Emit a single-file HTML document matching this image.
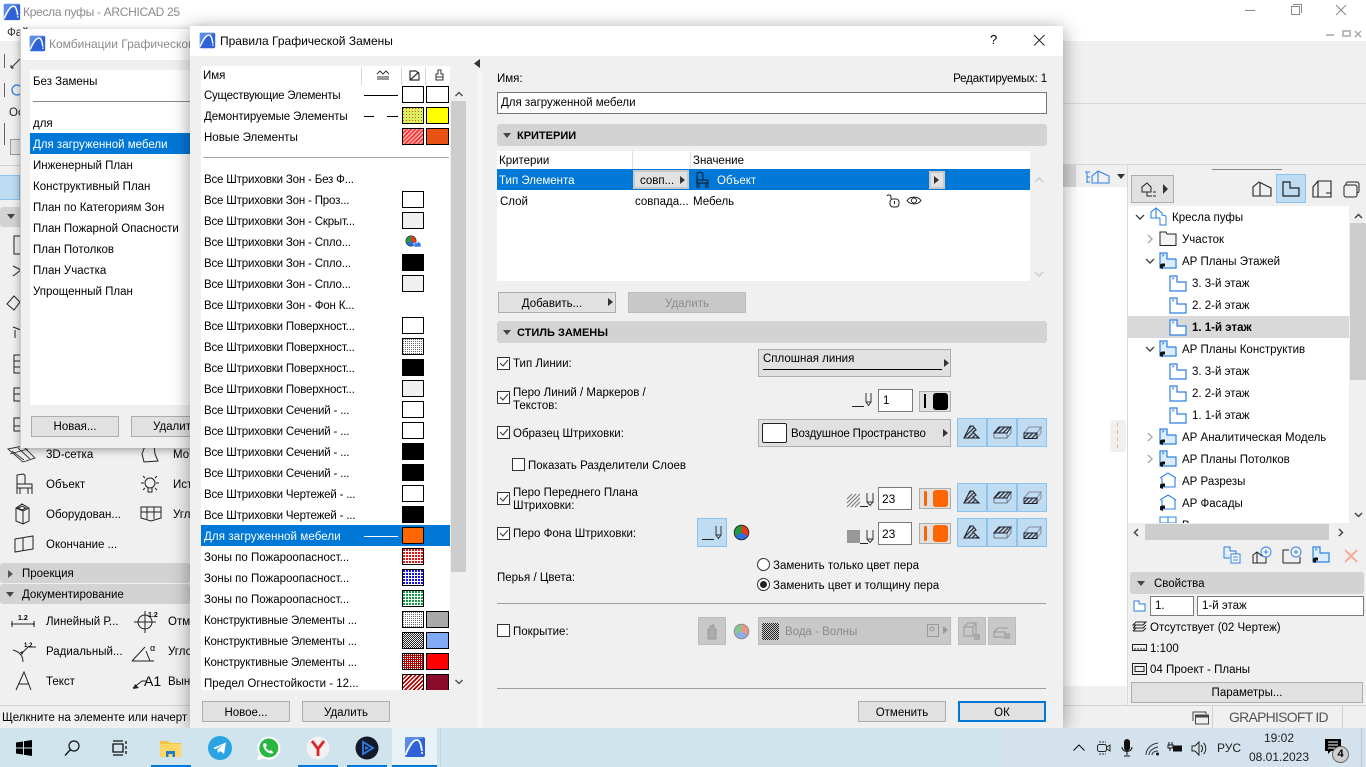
<!DOCTYPE html>
<html lang="ru"><head><meta charset="utf-8"><title>ARCHICAD</title>
<style>
html,body{margin:0;padding:0;width:1366px;height:767px;overflow:hidden;background:#f0f0f0;font-family:"Liberation Sans","Noto Sans CJK SC",sans-serif;font-size:11.5px;color:#000}
div,svg{position:absolute;box-sizing:border-box}
svg{overflow:visible}
.t{white-space:nowrap;line-height:18px;height:18px}
.v{letter-spacing:-.18px}
.w{background:#fff}
.b{background:#e1e1e1;border:1px solid #adadad;text-align:center;line-height:22px;white-space:nowrap}
.h{background:#d3d3d3;border-radius:3px}
.s{width:22px;height:17px;left:402px;border:1px solid #000;background:#fff}
.s2{width:23px;height:17px;left:426px;border:1px solid #000;background:#fff}
.p{background:conic-gradient(from 90deg at 1px 1px,transparent 0 50%,var(--c) 0 75%,transparent 0) 0 0/2px 2px,var(--g,#fff)}
.q{background:conic-gradient(from 90deg at 2px 2px,transparent 0 50%,var(--c) 0 75%,transparent 0) 0 0/3px 3px,#fff}
.dg{--c:#666}
.dd{background:repeating-conic-gradient(#222 0 25%,#eee 0 50%) 0 0/2px 2px}
.dr{--c:#f01010}
.db{--c:#1010f0}
.dn{--c:#109a40}
.drr{--c:#fff;--g:#a80000}
.cb{width:13px;height:13px;border:1px solid #333;background:#fff}
.tg{width:30px;height:29px;background:#bfdcf2;border:1px solid #8cc4ee}
.in{background:#fff;border:1px solid #7a7a7a}
.pb{width:32px;height:21px;left:919px;background:#e1e1e1;border:1px solid #adadad}
.dis{background:#c8c8c8;border:1px solid #bcbcbc}
</style></head><body>
<svg width="0" height="0" style="position:absolute">
<defs>
<pattern id="hx" width="3" height="3" patternUnits="userSpaceOnUse" patternTransform="rotate(-45)"><rect width="3" height="1.3" fill="#333"/></pattern>
<symbol id="plan" viewBox="0 0 18 17" overflow="visible"><path d="M1 1h7v6h9v9H1z" fill="#fff" stroke="#2d7fe6" stroke-width="1.2"/><path d="M3.500 2v3l2-2z" fill="#2d7fe6"/></symbol>
<symbol id="planf" viewBox="0 0 18 17" overflow="visible"><path d="M1 1h7v6h9v9H1z" fill="#dcecfb" stroke="#2d7fe6" stroke-width="1.2"/><path d="M3.500 2v3l2-2z" fill="#2d7fe6"/><path d="M1 16v-3.500l2-1h3v3H4v2.500z" fill="#111"/></symbol>
<symbol id="t1" viewBox="0 0 18 14" overflow="visible"><path d="M1 13 7 1h3l3 4-3 2 6 6z" fill="url(#hx)" stroke="#223" stroke-width="1.100"/></symbol>
<symbol id="t2" viewBox="0 0 18 14" overflow="visible"><path d="M1 13 V8L6 2H18L14 8H1M14 8V13H1M14 13L18 8V2" fill="none" stroke="#778" stroke-width="1"/><path d="M1 8 6 2H18L14 8z" fill="url(#hx)" stroke="#223"/></symbol>
<symbol id="t3" viewBox="0 0 18 14" overflow="visible"><path d="M1 8 6 2H18L14 8H1M14 13 18 8V2" fill="none" stroke="#889" stroke-width="1"/><rect x="1" y="8" width="13" height="5.500" fill="url(#hx)" stroke="#223"/></symbol>
<symbol id="pen" viewBox="0 0 20 15" overflow="visible"><path d="M0 14.500H12" stroke="#222" fill="none"/><path d="M14 1v9h5V1M14 10l2.500 3.500L19 10" stroke="#333" fill="none"/></symbol>
<symbol id="ac" viewBox="0 0 22 22"><rect x="1" y="1" width="20" height="20" rx="2" fill="#2f62d8"/><path d="M1 21 12 3l4 0 3 0v-2H1z" fill="#6d9df0" opacity=".7"/><path d="M1.500 19C5 10 9 4 13 4c3 0 4 5 5 11" fill="none" stroke="#fff" stroke-width="1.800"/><circle cx="18" cy="17" r="1" fill="#fff"/></symbol>
<symbol id="wh" viewBox="0 0 16 16"><circle cx="8" cy="8" r="7.300" fill="#222"/><path d="M8 8V1.500A6.500 6.500 0 0 0 2.400 11.300z" fill="#1f9a3c"/><path d="M8 8V1.500a6.500 6.500 0 0 1 5.600 9.800z" fill="#e53c1c"/><path d="M8 8l5.600 3.300a6.500 6.500 0 0 1-11.200 0z" fill="#2a6fe0"/></symbol>
</defs></svg>

<!-- main window -->
<div class="w" style="left:0;top:0;width:1366px;height:41px"></div>
<svg style="left:3px;top:3px" width="18" height="18"><use href="#ac" width="18" height="18"/></svg>
<div class="t" style="left:23px;top:3px;color:#8b8b8b;font-size:12px;letter-spacing:-.3px">Кресла пуфы - ARCHICAD 25</div>
<div class="t" style="left:7px;top:24px;color:#333">Фай</div>
<div style="left:1245px;top:10px;width:10px;height:1px;background:#888"></div>
<div style="left:1291px;top:6px;width:9px;height:9px;border:1px solid #888;background:#fff"></div>
<div style="left:1293px;top:4px;width:9px;height:9px;border-top:1px solid #888;border-right:1px solid #888"></div>
<svg style="left:1336px;top:5px" width="11" height="11"><path d="M0 0l10 10M10 0 0 10" stroke="#888" fill="none"/></svg>
<div style="left:1326px;top:34px;width:8px;height:2px;background:#bbb"></div>
<div style="left:1342px;top:30px;width:9px;height:7px;border:2px solid #bbb"></div>
<svg style="left:1355px;top:31px" width="6" height="6"><path d="M0 0l6 6M6 0 0 6" stroke="#aaa" stroke-width="1.500" fill="none"/></svg>

<!-- right gray chrome -->
<div style="left:1063px;top:103px;width:65px;height:1px;background:#d8d8d8"></div>
<div style="left:1063px;top:103px;width:303px;height:1px;background:#d8d8d8"></div>
<div style="left:1063px;top:164px;width:303px;height:1px;background:#d8d8d8"></div>
<div style="left:1063px;top:165px;width:13px;height:22px;background:#d5d5d5"></div>
<div class="w" style="left:1063px;top:187px;width:65px;height:499px"></div>
<svg style="left:1084px;top:169px" width="27" height="16"><path d="M1 3h5M3 3v11M3 8h3M3 13h3" stroke="#2d7fe6" fill="none"/><path d="M8 14V7l6-5 11 5v7z" fill="none" stroke="#2d7fe6"/><path d="M14 2v12" stroke="#2d7fe6"/></svg>
<svg style="left:1117px;top:174px" width="8" height="5"><path d="M0 0h8L4 5z" fill="#333"/></svg>
<div style="left:1127px;top:165px;width:1px;height:541px;background:#d8d8d8"></div>
<div style="left:1212px;top:169px;width:70px;height:1px;background:#888"></div>

<div class="b" style="left:1131px;top:175px;width:43px;height:28px;background:#e1e1e1"></div>
<svg style="left:1141px;top:181px" width="26" height="16"><path d="M1 6l5-4 4 4v5H1zM6 11v4h5M6 13h0" fill="none" stroke="#222"/><path d="M12 11h3M12 15h3" stroke="#222"/><path d="M22 3l5 5-5 5z" fill="#333"/></svg>
<svg style="left:1252px;top:180px" width="20" height="17" viewBox="0 0 20 17"><path d="M1 16V7l6-5 12 6v8zM8 3v13" fill="none" stroke="#222" stroke-width="1.100"/></svg>
<div class="tg" style="left:1276px;top:174px;height:29px"></div>
<svg style="left:1282px;top:181px" width="18" height="16"><path d="M1 1h7v6h9v8H1z" fill="none" stroke="#222" stroke-width="1.200"/></svg>
<svg style="left:1312px;top:180px" width="20" height="18"><path d="M1 17V7l5-6h13v16zM6 1v16" fill="none" stroke="#222" stroke-width="1.100"/><path d="M14 13h5" stroke="#222"/></svg>
<svg style="left:1343px;top:181px" width="18" height="17"><rect x="3" y="1" width="13" height="11" rx="2" fill="none" stroke="#222"/><rect x="1" y="4" width="13" height="12" rx="2" fill="#f0f0f0" stroke="#222"/></svg>

<!-- project tree -->
<div class="w" style="left:1128px;top:206px;width:221px;height:317px;overflow:hidden">
<div style="left:0;top:110px;width:221px;height:22px;background:#d9d9d9"></div>
<svg style="left:7px;top:9px" width="10" height="6"><path d="M1 0l4 4 4-4" stroke="#444" stroke-width="1.400" fill="none"/></svg>
<svg style="left:22px;top:1px" width="20" height="19"><path d="M1 11V5l5-4 6 5v5zM6 1v10" fill="none" stroke="#2d7fe6" stroke-width="1.100"/><path d="M12 8l4 1v9h-6v-7" fill="#fff" stroke="#2d7fe6"/></svg>
<div class="t" style="left:44px;top:3px">Кресла пуфы</div>
<svg style="left:19px;top:28px" width="7" height="10"><path d="M1 1l4 4-4 4" stroke="#aaa" stroke-width="1.400" fill="none"/></svg>
<svg style="left:31px;top:25px" width="18" height="16"><path d="M1 14.500V1h6l1 2h9v11.500z" fill="#f4f4f4" stroke="#222"/></svg>
<div class="t" style="left:54px;top:25px">Участок</div>
<svg style="left:17px;top:53px" width="10" height="6"><path d="M1 0l4 4 4-4" stroke="#444" stroke-width="1.400" fill="none"/></svg>
<svg style="left:31px;top:46px" width="18" height="17"><use href="#planf" width="18" height="17"/></svg>
<div class="t" style="left:54px;top:47px">АР Планы Этажей</div>
<svg style="left:41px;top:69px" width="18" height="17"><use href="#plan" width="18" height="17"/></svg>
<div class="t" style="left:64px;top:69px">3. 3-й этаж</div>
<svg style="left:41px;top:91px" width="18" height="17"><use href="#plan" width="18" height="17"/></svg>
<div class="t" style="left:64px;top:91px">2. 2-й этаж</div>
<svg style="left:41px;top:113px" width="18" height="17"><use href="#plan" width="18" height="17"/></svg>
<div class="t" style="left:64px;top:113px;font-weight:bold">1. 1-й этаж</div>
<svg style="left:17px;top:141px" width="10" height="6"><path d="M1 0l4 4 4-4" stroke="#444" stroke-width="1.400" fill="none"/></svg>
<svg style="left:31px;top:134px" width="18" height="17"><use href="#planf" width="18" height="17"/></svg>
<div class="t" style="left:54px;top:135px">АР Планы Конструктив</div>
<svg style="left:41px;top:157px" width="18" height="17"><use href="#plan" width="18" height="17"/></svg>
<div class="t" style="left:64px;top:157px">3. 3-й этаж</div>
<svg style="left:41px;top:179px" width="18" height="17"><use href="#plan" width="18" height="17"/></svg>
<div class="t" style="left:64px;top:179px">2. 2-й этаж</div>
<svg style="left:41px;top:201px" width="18" height="17"><use href="#plan" width="18" height="17"/></svg>
<div class="t" style="left:64px;top:201px">1. 1-й этаж</div>
<svg style="left:19px;top:226px" width="7" height="10"><path d="M1 1l4 4-4 4" stroke="#aaa" stroke-width="1.400" fill="none"/></svg>
<svg style="left:31px;top:222px" width="18" height="17"><use href="#planf" width="18" height="17"/></svg>
<div class="t" style="left:54px;top:223px">АР Аналитическая Модель</div>
<svg style="left:19px;top:248px" width="7" height="10"><path d="M1 1l4 4-4 4" stroke="#aaa" stroke-width="1.400" fill="none"/></svg>
<svg style="left:31px;top:244px" width="18" height="17"><use href="#planf" width="18" height="17"/></svg>
<div class="t" style="left:54px;top:245px">АР Планы Потолков</div>
<svg style="left:31px;top:266px" width="18" height="17"><path d="M1 6 9 1l8 5M3 6v9h13V6" fill="none" stroke="#2d7fe6" stroke-width="1.100"/><path d="M1 16v-3.500l2-1h3v3H4v2.500z" fill="#111"/></svg>
<div class="t" style="left:54px;top:267px">АР Разрезы</div>
<svg style="left:31px;top:288px" width="18" height="17"><path d="M1 6 9 1l8 5M3 6v9h13V6" fill="none" stroke="#2d7fe6" stroke-width="1.100"/><path d="M1 16v-3.500l2-1h3v3H4v2.500z" fill="#111"/></svg>
<div class="t" style="left:54px;top:289px">АР Фасады</div>
<svg style="left:31px;top:310px" width="18" height="17"><rect x="1" y="1" width="16" height="14" fill="none" stroke="#2d7fe6"/><path d="M9 1v14M1 7h16" stroke="#2d7fe6"/></svg>
<div class="t" style="left:54px;top:311px">В</div>
</div>
<div style="left:1350px;top:206px;width:16px;height:317px;background:#f0f0f0"></div>
<div style="left:1350px;top:223px;width:16px;height:157px;background:#cdcdcd"></div>
<svg style="left:1354px;top:213px" width="9" height="6"><path d="M1 5l3.500-3.500L8 5" stroke="#444" stroke-width="1.500" fill="none"/></svg>
<svg style="left:1354px;top:512px" width="9" height="6"><path d="M1 1l3.500 3.500L8 1" stroke="#444" stroke-width="1.500" fill="none"/></svg>
<div style="left:1145px;top:524px;width:184px;height:16px;background:#cdcdcd"></div>
<svg style="left:1133px;top:528px" width="6" height="9"><path d="M5 1 1.500 4.500 5 8" stroke="#444" stroke-width="1.500" fill="none"/></svg>
<svg style="left:1338px;top:528px" width="6" height="9"><path d="M1 1l3.500 3.500L1 8" stroke="#444" stroke-width="1.500" fill="none"/></svg>

<svg style="left:1223px;top:546px" width="18" height="18"><path d="M1 1h6v4h6v3M1 1v11h6" fill="#dcecfb" stroke="#2d7fe6"/><rect x="8" y="8" width="9" height="9" fill="#fff" stroke="#2d7fe6"/><path d="M10 11h5M10 14h5" stroke="#2d7fe6"/></svg>
<svg style="left:1252px;top:546px" width="20" height="18"><path d="M1 17V9l4-3 5 4h4v7zM5 6v11" fill="none" stroke="#222"/><circle cx="14" cy="6" r="5" fill="#fff" stroke="#2d7fe6"/><path d="M11.500 6h5M14 3.500v5" stroke="#2d7fe6"/></svg>
<svg style="left:1282px;top:546px" width="20" height="18"><path d="M1 17V4h6M1 17h17v-6" fill="none" stroke="#222"/><circle cx="14" cy="6" r="5" fill="#fff" stroke="#2d7fe6"/><path d="M11.500 6h5M14 3.500v5" stroke="#2d7fe6"/></svg>
<svg style="left:1312px;top:546px" width="18" height="17"><use href="#planf" width="18" height="17"/></svg>
<svg style="left:1344px;top:549px" width="14" height="14"><path d="M1 1l12 12M13 1 1 13" stroke="#f7ab9a" stroke-width="2" fill="none"/></svg>

<div class="h" style="left:1130px;top:572px;width:234px;height:22px"></div>
<svg style="left:1137px;top:581px" width="8" height="5"><path d="M0 0h8L4 5z" fill="#444"/></svg>
<div class="t" style="left:1154px;top:575px">Свойства</div>
<svg style="left:1133px;top:600px" width="13" height="12"><path d="M1 1h5v3h6v7H1z" fill="#fff" stroke="#2d7fe6"/></svg>
<div class="in t" style="left:1150px;top:596px;width:44px;height:20px;padding:0 4px">1.</div>
<div class="in t" style="left:1197px;top:596px;width:167px;height:20px;padding:0 4px">1-й этаж</div>
<svg style="left:1132px;top:621px" width="15" height="12"><path d="M1 4l3-3h10l-3 3zM1 7l3-3M14 4l-3 3H1M1 10l3-3M14 7l-3 3H1" fill="none" stroke="#222"/></svg>
<div class="t" style="left:1150px;top:619px">Отсутствует (02 Чертеж)</div>
<svg style="left:1132px;top:644px" width="15" height="8"><rect x=".5" y=".5" width="14" height="6" fill="none" stroke="#222"/><path d="M3 4v2M6 4v2M9 4v2M12 4v2" stroke="#222"/></svg>
<div class="t" style="left:1150px;top:640px">1:100</div>
<svg style="left:1132px;top:663px" width="15" height="12"><rect x=".5" y=".5" width="14" height="11" fill="none" stroke="#222"/><rect x="3" y="3.500" width="9" height="5" fill="none" stroke="#222"/></svg>
<div class="t" style="left:1150px;top:661px">04 Проект - Планы</div>
<div class="b" style="left:1131px;top:682px;width:232px;height:21px;line-height:21px">Параметры...</div>

<!-- status bar -->
<div style="left:0;top:705px;width:1366px;height:1px;background:#d0d0d0"></div>
<div class="t" style="left:2px;top:709px;font-size:11.5px">Щелкните на элементе или начерт</div>
<svg style="left:1192px;top:711px" width="18" height="14"><path d="M1 10V1h13v2" fill="none" stroke="#444"/><rect x="3.500" y="4" width="13" height="9" fill="#f0f0f0" stroke="#444"/><path d="M4 5.500h12" stroke="#444" stroke-width="2"/></svg>
<div style="left:1212px;top:706px;width:1px;height:22px;background:#d0d0d0"></div>
<div style="left:1342px;top:706px;width:1px;height:22px;background:#d0d0d0"></div>
<div class="t" style="left:1229px;top:708px;font-size:14px;color:#555;letter-spacing:-.75px">GRAPHISOFT ID</div>

<!-- left palette -->
<div style="left:0;top:165px;width:200px;height:1px;background:#d0d0d0"></div>
<div style="left:0;top:175px;width:20px;height:25px;background:#bfdcf2;border:1px solid #8cc4ee;border-left:0"></div>
<div class="h" style="left:0;top:207px;width:60px;height:20px"></div>
<svg style="left:7px;top:214px" width="8" height="5"><path d="M0 0h8L4 5z" fill="#444"/></svg>
<div style="left:4px;top:54px;width:1px;height:14px;background:#666"></div>
<div style="left:4px;top:83px;width:1px;height:14px;background:#666"></div>
<div class="t" style="left:9px;top:104px;color:#222">Ос</div>
<div style="left:4px;top:123px;width:1px;height:22px;background:#666"></div>
<div style="left:10px;top:139px;width:20px;height:16px;border:1px solid #999;background:#e1e1e1"></div>
<svg style="left:10px;top:58px" width="12" height="11"><path d="M1 10 10 1M1 10h3M1 10V7" stroke="#333" fill="none"/></svg>
<svg style="left:11px;top:84px" width="10" height="12"><circle cx="6" cy="6" r="5" fill="none" stroke="#2d7fe6" stroke-width="1.300"/></svg>
<svg style="left:12px;top:235px" width="10" height="20"><path d="M9 1H2v18h7" fill="none" stroke="#222"/></svg>
<svg style="left:12px;top:265px" width="10" height="12"><path d="M1 1l8 4-8 6" fill="none" stroke="#222"/></svg>
<svg style="left:6px;top:295px" width="16" height="16"><path d="M1 9 8 1l6 6-6 8z" fill="none" stroke="#222"/></svg>
<svg style="left:12px;top:325px" width="10" height="14"><path d="M1 2l8 3M3 5v8" fill="none" stroke="#222"/></svg>
<svg style="left:13px;top:354px" width="10" height="20"><path d="M9 1H1v18h8M1 7h8M1 13h8" fill="none" stroke="#222"/></svg>
<svg style="left:13px;top:387px" width="10" height="15"><path d="M9 1H1v13h8M1 7h8" fill="none" stroke="#222"/></svg>
<svg style="left:13px;top:417px" width="10" height="15"><path d="M9 1H1v13h8M1 9h8" fill="none" stroke="#222"/></svg>

<svg style="left:7px;top:445px" width="30" height="18"><path d="M1 4 16 1l12 12-12 4zM5 6l12 9M11 3l12 11M3 9l18-5" fill="none" stroke="#333" stroke-width=".9"/></svg>
<div class="t" style="left:46px;top:446px">3D-сетка</div>
<svg style="left:16px;top:473px" width="18" height="22"><path d="M1 21V2l6-1 2 1v9M1 11h15v10M1 15h15M4 15v6M12 15v6" fill="none" stroke="#222"/></svg>
<div class="t" style="left:46px;top:476px">Объект</div>
<svg style="left:15px;top:503px" width="15" height="22"><path d="M1 5l6-4 7 4v13l-6 3-7-3zM1 5l7 3 6-3M8 8v13M3 5l4-2 4 2-4 2z" fill="none" stroke="#222"/></svg>
<div class="t" style="left:46px;top:506px">Оборудован...</div>
<svg style="left:14px;top:535px" width="20" height="18"><path d="M1 4 19 1v13L1 17zM9 3v13" fill="none" stroke="#222"/></svg>
<div class="t" style="left:46px;top:536px">Окончание ...</div>
<svg style="left:140px;top:445px" width="20" height="19"><path d="M5 1 2 9l2 8 14-1-3-7-1-8" fill="none" stroke="#222"/></svg>
<div class="t" style="left:173px;top:446px">Мо</div>
<svg style="left:140px;top:474px" width="20" height="20"><circle cx="10" cy="9" r="5" fill="none" stroke="#222"/><path d="M8 14v4h4v-4M1 9h3M16 9h3M3 2l2 2M17 2l-2 2M3 16l2-2M17 16l-2-2" fill="none" stroke="#222"/></svg>
<div class="t" style="left:173px;top:476px">Ист</div>
<svg style="left:140px;top:505px" width="22" height="17"><path d="M1 2h20v11l-10 3-10-3zM1 7h20M7 2v12M14 2v12" fill="none" stroke="#222"/></svg>
<div class="t" style="left:173px;top:506px">Угл</div>

<div class="h" style="left:0;top:563px;width:190px;height:20px"></div>
<svg style="left:8px;top:570px" width="5" height="8"><path d="M0 0l5 4-5 4z" fill="#555"/></svg>
<div class="t" style="left:22px;top:565px">Проекция</div>
<div class="h" style="left:0;top:584px;width:190px;height:20px"></div>
<svg style="left:6px;top:592px" width="8" height="5"><path d="M0 0h8L4 5z" fill="#444"/></svg>
<div class="t" style="left:22px;top:586px">Документирование</div>

<svg style="left:10px;top:613px" width="26" height="15"><path d="M1 11h24M2 8v6M24 8v6" stroke="#222" fill="none"/><text x="8" y="7" font-size="7" font-weight="bold" font-family="Liberation Sans">1.2</text></svg>
<div class="t" style="left:46px;top:613px">Линейный Р...</div>
<svg style="left:12px;top:643px" width="24" height="20"><path d="M1 7C8 9 11 13 11 19M10 10l6-6h8" fill="none" stroke="#222"/><path d="M8 9l4-1-2 4z" fill="#222"/><text x="12" y="4" font-size="6" font-weight="bold" font-family="Liberation Sans">1.2</text></svg>
<div class="t" style="left:46px;top:643px">Радиальный...</div>
<svg style="left:15px;top:671px" width="18" height="20"><path d="M1 19 9 1l7 18M4 13h10" fill="none" stroke="#222"/></svg>
<div class="t" style="left:46px;top:673px">Текст</div>
<svg style="left:134px;top:611px" width="26" height="22"><circle cx="11" cy="11" r="7" fill="none" stroke="#222"/><path d="M0 11h22M11 0v22" stroke="#222"/><text x="14" y="6" font-size="7" font-weight="bold" font-family="Liberation Sans">1.2</text></svg>
<div class="t" style="left:168px;top:613px">Отм</div>
<svg style="left:131px;top:643px" width="26" height="20"><path d="M1 18 14 4M1 18h22M15 8l4 10" fill="none" stroke="#222"/><text x="19" y="8" font-size="9" font-family="Liberation Sans">α</text></svg>
<div class="t" style="left:168px;top:643px">Угло</div>
<svg style="left:132px;top:674px" width="34" height="16"><path d="M1 14 10 7h5" fill="none" stroke="#222"/><path d="M1 15l6-1-4-4z" fill="#222"/><text x="12" y="12" font-size="14" font-family="Liberation Sans">A1</text></svg>
<div class="t" style="left:168px;top:673px">Вын</div>

<!-- dialog 1 -->
<div style="left:20px;top:29px;width:190px;height:419px;background:#f0f0f0;box-shadow:0 2px 8px rgba(0,0,0,.35);overflow:hidden;border-left:1px solid #ccc">
<div class="w" style="left:0;top:0;width:190px;height:31px"></div>
<svg style="left:8px;top:6px" width="17" height="17"><use href="#ac" width="17" height="17"/></svg>
<div class="t" style="left:28px;top:6px;color:#8b8b8b;font-size:12px">Комбинации Графического</div>
<div class="w" style="left:9px;top:41px;width:181px;height:335px"></div>
<div class="t" style="left:12px;top:44px">Без Замены</div>
<div style="left:12px;top:72px;width:178px;height:1px;background:#888"></div>
<div class="t" style="left:12px;top:86px">для</div>
<div style="left:9px;top:104px;width:181px;height:21px;background:#0078d7"></div>
<div class="t" style="left:12px;top:107px;color:#fff">Для загруженной мебели</div>
<div class="t" style="left:12px;top:128px">Инженерный План</div>
<div class="t" style="left:12px;top:149px">Конструктивный План</div>
<div class="t" style="left:12px;top:170px">План по Категориям Зон</div>
<div class="t" style="left:12px;top:191px">План Пожарной Опасности</div>
<div class="t" style="left:12px;top:212px">План Потолков</div>
<div class="t" style="left:12px;top:233px">План Участка</div>
<div class="t" style="left:12px;top:254px">Упрощенный План</div>
<div class="b" style="left:10px;top:387px;width:88px;height:21px;line-height:21px">Новая...</div>
<div class="b" style="left:110px;top:387px;width:88px;height:21px;line-height:21px">Удалить</div>
</div>

<!-- dialog 2 -->
<div style="left:190px;top:26px;width:873px;height:702px;background:#f0f0f0;box-shadow:0 3px 18px rgba(0,0,0,.4)"></div>
<div class="w" style="left:190px;top:26px;width:873px;height:30px"></div>
<svg style="left:199px;top:32px" width="17" height="17"><use href="#ac" width="17" height="17"/></svg>
<div class="t" style="left:220px;top:32px;font-size:12px">Правила Графической Замены</div>
<div class="t" style="left:990px;top:31px;font-size:13px">?</div>
<svg style="left:1034px;top:35px" width="11" height="11"><path d="M0 0l10.500 10.500M10.500 0 0 10.500" stroke="#222" fill="none"/></svg>
<svg style="left:474px;top:59px" width="6" height="9"><path d="M6 0v9L0 4.500z" fill="#333"/></svg>
<div style="left:477px;top:70px;width:5px;height:658px;background:#f6f6f6"></div>

<!-- rules list -->
<div class="w" style="left:201px;top:66px;width:249px;height:624px"></div>
<div style="left:361px;top:67px;width:1px;height:18px;background:#d8d8d8"></div>
<div style="left:401px;top:67px;width:1px;height:18px;background:#d8d8d8"></div>
<div style="left:425px;top:67px;width:1px;height:18px;background:#d8d8d8"></div>
<div class="t" style="left:203px;top:67px">Имя</div>
<svg style="left:376px;top:69px" width="14" height="11"><path d="M1 5l3-3 3 3 3-3 3 3M1 8h12M1 10h12" fill="none" stroke="#333"/></svg>
<svg style="left:409px;top:70px" width="11" height="11"><path d="M1 1h6l3 3v6H1zM1 10 10 2" fill="none" stroke="#333" stroke-width="1.200"/></svg>
<svg style="left:435px;top:69px" width="9" height="12"><path d="M3 1h3v4h2v6H1V5h2z" fill="none" stroke="#333"/><path d="M1 8h7" stroke="#333"/></svg>

<div class="t" style="left:204px;top:87px;letter-spacing:-.25px">Существующие Элементы</div>
<div style="left:364px;top:95px;width:34px;height:1px;background:#000"></div>
<div class="s" style="top:86px"></div><div class="s2" style="top:86px"></div>
<div class="t" style="left:204px;top:108px;letter-spacing:-.1px">Демонтируемые Элементы</div>
<div style="left:364px;top:116px;width:10px;height:1px;background:#000"></div>
<div style="left:387px;top:116px;width:11px;height:1px;background:#000"></div>
<div class="s" style="top:107px;background:conic-gradient(from 90deg at 1px 1px,transparent 0 50%,#c9503a 0 75%,transparent 0) 0 0/3px 3px,#d9f25a"></div><div class="s2" style="top:107px;background:#ff0"></div>
<div class="t" style="left:204px;top:129px">Новые Элементы</div>
<div class="s" style="top:128px;background:repeating-linear-gradient(-45deg,#f33 0 1.500px,#ffb0b0 1.500px 3px)"></div><div class="s2" style="top:128px;background:#ea5214"></div>
<div style="left:203px;top:157px;width:246px;height:1px;background:#a8a8a8"></div>

<div class="t v" style="left:204px;top:171px">Все Штриховки Зон - Без Ф...</div>
<div class="t v" style="left:204px;top:192px">Все Штриховки Зон - Проз...</div>
<div class="s" style="top:191px"></div>
<div class="t v" style="left:204px;top:213px">Все Штриховки Зон - Скрыт...</div>
<div class="s" style="top:212px;background:#f0f0f0"></div>
<div class="t v" style="left:204px;top:234px">Все Штриховки Зон - Спло...</div>
<svg style="left:405px;top:235px" width="17" height="13"><use href="#wh" width="12" height="12"/><path d="M9 12V8h3l1-2 2 2h1v4z" fill="#2d7fe6" stroke="#fff" stroke-width=".6"/></svg>
<div class="t v" style="left:204px;top:255px">Все Штриховки Зон - Спло...</div>
<div class="s" style="top:254px;background:#000"></div>
<div class="t v" style="left:204px;top:276px">Все Штриховки Зон - Спло...</div>
<div class="s" style="top:275px;background:#f0f0f0"></div>
<div class="t v" style="left:204px;top:297px">Все Штриховки Зон - Фон К...</div>
<div class="t v" style="left:204px;top:318px">Все Штриховки Поверхност...</div>
<div class="s" style="top:317px"></div>
<div class="t v" style="left:204px;top:339px">Все Штриховки Поверхност...</div>
<div class="s p dg" style="top:338px"></div>
<div class="t v" style="left:204px;top:360px">Все Штриховки Поверхност...</div>
<div class="s" style="top:359px;background:#000"></div>
<div class="t v" style="left:204px;top:381px">Все Штриховки Поверхност...</div>
<div class="s" style="top:380px;background:#f0f0f0"></div>
<div class="t v" style="left:204px;top:402px">Все Штриховки Сечений - ...</div>
<div class="s" style="top:401px"></div>
<div class="t v" style="left:204px;top:423px">Все Штриховки Сечений - ...</div>
<div class="s" style="top:422px"></div>
<div class="t v" style="left:204px;top:444px">Все Штриховки Сечений - ...</div>
<div class="s" style="top:443px;background:#000"></div>
<div class="t v" style="left:204px;top:465px">Все Штриховки Сечений - ...</div>
<div class="s" style="top:464px;background:#000"></div>
<div class="t v" style="left:204px;top:486px">Все Штриховки Чертежей - ...</div>
<div class="s" style="top:485px"></div>
<div class="t v" style="left:204px;top:507px">Все Штриховки Чертежей - ...</div>
<div class="s" style="top:506px;background:#000"></div>
<div style="left:201px;top:525px;width:249px;height:21px;background:#0078d7"></div>
<div class="t" style="left:204px;top:528px;color:#fff;letter-spacing:.1px">Для загруженной мебели</div>
<div style="left:364px;top:536px;width:34px;height:1px;background:#fff"></div>
<div class="s" style="top:527px;background:#ff6600"></div>
<div class="t" style="left:204px;top:549px">Зоны по Пожароопасност...</div>
<div class="s q dr" style="top:548px"></div>
<div class="t" style="left:204px;top:570px">Зоны по Пожароопасност...</div>
<div class="s q db" style="top:569px"></div>
<div class="t" style="left:204px;top:591px">Зоны по Пожароопасност...</div>
<div class="s q dn" style="top:590px"></div>
<div class="t v" style="left:204px;top:612px">Конструктивные Элементы ...</div>
<div class="s p dg" style="top:611px"></div><div class="s2" style="top:611px;background:#a9a9a9"></div>
<div class="t v" style="left:204px;top:633px">Конструктивные Элементы ...</div>
<div class="s dd" style="top:632px"></div><div class="s2" style="top:632px;background:#80aaf5"></div>
<div class="t v" style="left:204px;top:654px">Конструктивные Элементы ...</div>
<div class="s p drr" style="top:653px"></div><div class="s2" style="top:653px;background:#f00"></div>
<div class="t" style="left:204px;top:675px">Предел Огнестойкости - 12...</div>
<div class="s" style="top:674px;background:repeating-linear-gradient(-45deg,#b00000 0 1.500px,#fff 1.500px 3px)"></div><div class="s2" style="top:674px;background:#8b0b2d"></div>
<div style="left:201px;top:690px;width:270px;height:8px;background:#f0f0f0"></div>

<div style="left:451px;top:101px;width:15px;height:471px;background:#cdcdcd"></div>
<svg style="left:455px;top:91px" width="8" height="6"><path d="M.5 5 4 1.500 7.500 5" stroke="#555" stroke-width="1.500" fill="none"/></svg>
<svg style="left:455px;top:679px" width="8" height="6"><path d="M.5 1 4 4.500 7.500 1" stroke="#555" stroke-width="1.500" fill="none"/></svg>

<div class="b" style="left:202px;top:701px;width:88px;height:21px">Новое...</div>
<div class="b" style="left:302px;top:701px;width:88px;height:21px">Удалить</div>

<!-- right pane -->
<div class="t" style="left:497px;top:70px">Имя:</div>
<div class="t" style="left:847px;top:70px;width:200px;text-align:right;letter-spacing:-.15px">Редактируемых: 1</div>
<div class="in t" style="left:497px;top:92px;width:550px;height:22px;padding:1px 3px;border-color:#777">Для загруженной мебели</div>
<div class="h" style="left:497px;top:124px;width:550px;height:22px"></div>
<svg style="left:503px;top:133px" width="8" height="5"><path d="M0 0h8L4 5z" fill="#444"/></svg>
<div class="t" style="left:517px;top:127px;font-weight:bold;font-size:11px">КРИТЕРИИ</div>

<div class="w" style="left:497px;top:151px;width:533px;height:130px"></div>
<div style="left:632px;top:151px;width:1px;height:18px;background:#e0e0e0"></div>
<div style="left:690px;top:151px;width:1px;height:18px;background:#e0e0e0"></div>
<div class="t" style="left:499px;top:152px">Критерии</div>
<div class="t" style="left:693px;top:152px">Значение</div>
<div style="left:497px;top:169px;width:533px;height:21px;background:#0078d7"></div>
<div class="t" style="left:499px;top:172px;color:#fff">Тип Элемента</div>
<div class="b" style="left:633px;top:170px;width:56px;height:19px;line-height:18px;text-align:left;padding-left:5px;background:#e1e1e1;border:2px solid #c8c8c8">совп...</div>
<svg style="left:680px;top:176px" width="5" height="8"><path d="M0 0l5 4-5 4z" fill="#333"/></svg>
<svg style="left:696px;top:171px" width="13" height="18"><path d="M1 17V2l4-1 2 2v6M1 9h11v8M1 12h11M3 12v5M10 12v5" fill="none" stroke="#111" stroke-width=".9"/></svg>
<div class="t" style="left:717px;top:172px;color:#fff">Объект</div>
<div class="b" style="left:929px;top:171px;width:16px;height:18px;border:2px solid #c8c8c8"></div>
<svg style="left:934px;top:176px" width="5" height="8"><path d="M0 0l5 4-5 4z" fill="#333"/></svg>
<svg style="left:1034px;top:176px" width="10" height="7"><path d="M1 6l4-4 4 4" stroke="#cfcfcf" stroke-width="1.600" fill="none"/></svg>
<svg style="left:1034px;top:271px" width="10" height="7"><path d="M1 1l4 4 4-4" stroke="#cfcfcf" stroke-width="1.600" fill="none"/></svg>
<div class="t" style="left:500px;top:193px">Слой</div>
<div class="t" style="left:635px;top:193px">совпада...</div>
<div class="t" style="left:693px;top:193px">Мебель</div>
<svg style="left:886px;top:194px" width="14" height="14"><rect x="4" y="5" width="9" height="8" rx="3" fill="none" stroke="#222"/><path d="M8.500 7v3M5 5V3C5 1 2 0 1 2" fill="none" stroke="#222"/></svg>
<svg style="left:906px;top:195px" width="16" height="11"><path d="M1 5.500C4 1 12 1 15 5.500 12 10 4 10 1 5.500z" fill="none" stroke="#222"/><circle cx="8" cy="5.500" r="2.500" fill="none" stroke="#222"/></svg>

<div class="b" style="left:498px;top:292px;width:118px;height:21px;padding-right:10px">Добавить...</div>
<svg style="left:608px;top:298px" width="5" height="8"><path d="M0 0l5 4-5 4z" fill="#333"/></svg>
<div class="b" style="left:628px;top:292px;width:118px;height:21px;background:#c8c8c8;border-color:#bcbcbc;color:#8c8c8c">Удалить</div>
<div class="h" style="left:497px;top:321px;width:550px;height:22px"></div>
<svg style="left:503px;top:330px" width="8" height="5"><path d="M0 0h8L4 5z" fill="#444"/></svg>
<div class="t" style="left:517px;top:324px;font-weight:bold;font-size:11px">СТИЛЬ ЗАМЕНЫ</div>

<div class="cb" style="left:497px;top:357px"></div><svg style="left:499px;top:359px" width="10" height="9"><path d="M1 4l3 3 5-6" stroke="#333" fill="none"/></svg>
<div class="t" style="left:513px;top:355px">Тип Линии:</div>
<div class="b" style="left:758px;top:349px;width:193px;height:28px"></div>
<div class="t" style="left:763px;top:350px">Сплошная линия</div>
<div style="left:763px;top:369px;width:179px;height:1px;background:#000"></div>
<svg style="left:944px;top:359px" width="5" height="8"><path d="M0 0l5 4-5 4z" fill="#333"/></svg>

<div class="cb" style="left:497px;top:391px"></div><svg style="left:499px;top:393px" width="10" height="9"><path d="M1 4l3 3 5-6" stroke="#333" fill="none"/></svg>
<div class="t" style="left:513px;top:384px">Перо Линий / Маркеров /</div>
<div class="t" style="left:513px;top:397px">Текстов:</div>
<svg style="left:852px;top:392px" width="20" height="15"><use href="#pen" width="20" height="15"/></svg>
<div class="in t" style="left:878px;top:389px;width:35px;height:23px;padding:2px 4px">1</div>
<div class="pb" style="top:391px"></div><div style="left:924px;top:394px;width:2px;height:14px;background:#000"></div><div style="left:933px;top:393px;width:15px;height:17px;background:#000;border-radius:3px"></div>

<div class="cb" style="left:497px;top:426px"></div><svg style="left:499px;top:428px" width="10" height="9"><path d="M1 4l3 3 5-6" stroke="#333" fill="none"/></svg>
<div class="t" style="left:513px;top:425px">Образец Штриховки:</div>
<div class="b" style="left:758px;top:419px;width:193px;height:28px"></div>
<div style="left:762px;top:423px;width:25px;height:20px;background:#fff;border:1px solid #222;border-radius:2px"></div>
<div class="t" style="left:791px;top:425px;letter-spacing:-.13px">Воздушное Пространство</div>
<svg style="left:943px;top:429px" width="5" height="8"><path d="M0 0l5 4-5 4z" fill="#333"/></svg>

<div class="tg" style="left:957px;top:418px"></div><div class="tg" style="left:987px;top:418px"></div><div class="tg" style="left:1017px;top:418px"></div>
<svg style="left:963px;top:425px" width="18" height="14"><use href="#t1" width="18" height="14"/></svg>
<svg style="left:992px;top:425px" width="20" height="14"><use href="#t2" width="20" height="14"/></svg>
<svg style="left:1022px;top:425px" width="20" height="14"><use href="#t3" width="20" height="14"/></svg>

<div class="cb" style="left:512px;top:458px"></div>
<div class="t" style="left:528px;top:457px">Показать Разделители Слоев</div>

<div class="cb" style="left:497px;top:492px"></div><svg style="left:499px;top:494px" width="10" height="9"><path d="M1 4l3 3 5-6" stroke="#333" fill="none"/></svg>
<div class="t" style="left:513px;top:484px">Перо Переднего Плана</div>
<div class="t" style="left:513px;top:497px">Штриховки:</div>
<svg style="left:847px;top:494px" width="13" height="13"><path d="M0 5 5 0M0 9 9 0M0 13 13 0M4 13l9-9M8 13l5-5" stroke="#777" fill="none"/></svg>
<svg style="left:860px;top:492px" width="14" height="15"><path d="M0 14.500H8" stroke="#222"/><path d="M7 1v9h6V1M7 10l3 3.500L13 10" stroke="#333" fill="none"/></svg>
<div class="in t" style="left:878px;top:487px;width:34px;height:23px;padding:2px 3px;font-size:12px">23</div>
<div class="pb" style="top:488px"></div><div style="left:924px;top:491px;width:3px;height:15px;background:#ff6600;border-radius:1px"></div><div style="left:933px;top:490px;width:15px;height:17px;background:#ff6600;border-radius:3px"></div>
<div class="tg" style="left:957px;top:483px"></div><div class="tg" style="left:987px;top:483px"></div><div class="tg" style="left:1017px;top:483px"></div>
<svg style="left:963px;top:490px" width="18" height="14"><use href="#t1" width="18" height="14"/></svg>
<svg style="left:992px;top:490px" width="20" height="14"><use href="#t2" width="20" height="14"/></svg>
<svg style="left:1022px;top:490px" width="20" height="14"><use href="#t3" width="20" height="14"/></svg>

<div class="cb" style="left:497px;top:527px"></div><svg style="left:499px;top:529px" width="10" height="9"><path d="M1 4l3 3 5-6" stroke="#333" fill="none"/></svg>
<div class="t" style="left:513px;top:525px">Перо Фона Штриховки:</div>
<div class="tg" style="left:697px;top:518px"></div>
<svg style="left:702px;top:525px" width="20" height="15"><use href="#pen" width="20" height="15"/></svg>
<svg style="left:733px;top:524px" width="17" height="17"><use href="#wh" width="17" height="17"/></svg>
<div style="left:847px;top:530px;width:13px;height:13px;background:#96989a"></div>
<svg style="left:860px;top:529px" width="14" height="15"><path d="M0 14.500H8" stroke="#222"/><path d="M7 1v9h6V1M7 10l3 3.500L13 10" stroke="#333" fill="none"/></svg>
<div class="in t" style="left:878px;top:522px;width:34px;height:23px;padding:2px 3px;font-size:12px">23</div>
<div class="pb" style="top:523px"></div><div style="left:924px;top:526px;width:3px;height:15px;background:#ff6600;border-radius:1px"></div><div style="left:933px;top:525px;width:15px;height:17px;background:#ff6600;border-radius:3px"></div>
<div class="tg" style="left:957px;top:518px"></div><div class="tg" style="left:987px;top:518px"></div><div class="tg" style="left:1017px;top:518px"></div>
<svg style="left:963px;top:525px" width="18" height="14"><use href="#t1" width="18" height="14"/></svg>
<svg style="left:992px;top:525px" width="20" height="14"><use href="#t2" width="20" height="14"/></svg>
<svg style="left:1022px;top:525px" width="20" height="14"><use href="#t3" width="20" height="14"/></svg>

<div class="t" style="left:497px;top:569px">Перья / Цвета:</div>
<div style="left:757px;top:558px;width:13px;height:13px;border-radius:50%;border:1px solid #333;background:#fff"></div>
<div class="t" style="left:773px;top:557px">Заменить только цвет пера</div>
<div style="left:757px;top:578px;width:13px;height:13px;border-radius:50%;border:1px solid #333;background:#fff"></div>
<div style="left:760px;top:581px;width:7px;height:7px;border-radius:50%;background:#222"></div>
<div class="t" style="left:773px;top:577px">Заменить цвет и толщину пера</div>
<div style="left:497px;top:603px;width:549px;height:1px;background:#a0a0a0"></div>

<div class="cb" style="left:497px;top:624px"></div>
<div class="t" style="left:513px;top:623px">Покрытие:</div>
<div class="dis" style="left:698px;top:617px;width:28px;height:28px"></div>
<svg style="left:707px;top:623px" width="10" height="17"><path d="M3 3h3l0-2 1 2v3h2v10H1V6h2z" fill="#adadad" stroke="#999"/></svg>
<svg style="left:733px;top:623px;opacity:.5" width="17" height="17"><use href="#wh" width="17" height="17"/></svg>
<div class="dis" style="left:758px;top:617px;width:193px;height:28px"></div>
<div style="left:762px;top:623px;width:17px;height:17px;background:repeating-conic-gradient(#222 0 25%,#ccc 0 50%) 0 0/2px 2px;border-radius:2px"></div>
<div class="t" style="left:785px;top:623px;color:#8a8a8a">Вода - Волны</div>
<svg style="left:927px;top:624px" width="22" height="15"><rect x=".5" y=".5" width="11" height="12" fill="none" stroke="#999"/><circle cx="5" cy="5" r="2" fill="none" stroke="#999"/><path d="M16 2l5 4-5 4z" fill="#999"/></svg>
<div class="dis" style="left:958px;top:617px;width:28px;height:28px"></div>
<svg style="left:963px;top:622px" width="18" height="20"><path d="M1 5l4-4h8v11l-2 2H1zM1 5h9v9M10 5l3-4" fill="none" stroke="#999"/><rect x="11" y="12" width="6" height="6" fill="#aaa"/></svg>
<div class="dis" style="left:988px;top:617px;width:28px;height:28px"></div>
<svg style="left:993px;top:624px" width="18" height="16"><path d="M1 8l4-4h10M1 8h11v5H1z" fill="none" stroke="#999"/><rect x="11" y="9" width="6" height="6" fill="#aaa"/></svg>
<div style="left:497px;top:688px;width:549px;height:1px;background:#a0a0a0"></div>
<div class="b" style="left:858px;top:701px;width:88px;height:21px">Отменить</div>
<div class="b" style="left:958px;top:701px;width:88px;height:21px;border:2px solid #0078d7;line-height:20px">ОК</div>

<!-- side handle -->
<div style="left:1110px;top:420px;width:16px;height:32px;background:#f0f0f0;border-radius:3px"></div>
<div style="left:1117px;top:423px;width:1px;height:26px;background:repeating-linear-gradient(#f4b183 0 4px,transparent 4px 7px)"></div>

<!-- taskbar -->
<div style="left:0;top:728px;width:1366px;height:39px;background:#cfe4ed"></div>
<div style="left:1000px;top:728px;width:366px;height:39px;background:#d3e2ec"></div>
<svg style="left:16px;top:740px" width="16" height="16"><path d="M0 2.500 7 1.500V7.500H0zM8 1.300 16 0V7.500H8zM0 8.500H7V14.500L0 13.500zM8 8.500H16V16L8 14.700z" fill="#000"/></svg>
<svg style="left:64px;top:740px" width="16" height="16"><circle cx="10" cy="6" r="5" fill="none" stroke="#111" stroke-width="1.200"/><path d="M6.500 9.500 1 15.500" stroke="#111" stroke-width="1.300"/></svg>
<svg style="left:112px;top:740px" width="16" height="16"><path d="M1 1h10M1 15h10M1 4h10v8H1zM14 1v3M14 6v3M14 11v3" fill="none" stroke="#111" stroke-width="1.300"/></svg>
<svg style="left:160px;top:739px" width="22" height="19"><path d="M0 2h8l2 2h11v14H0z" fill="#f5c242"/><path d="M0 5h21v13H0z" fill="#ffd766"/><path d="M6 18v-6h9v6h-2.500v-3h-4v3z" fill="#1f7cc9"/></svg>
<div style="left:151px;top:765px;width:40px;height:2px;background:#0078d7"></div>
<svg style="left:208px;top:736px" width="24" height="24"><circle cx="12" cy="12" r="12" fill="#2aa3e2"/><path d="M5 12 18 6.500 16 18l-4-3-2 2-.7-3.500 6-5-7.500 4.500z" fill="#fff"/></svg>
<svg style="left:256px;top:736px" width="25" height="25"><path d="M1 24l2-6A11.500 11.500 0 1 1 8 22.500z" fill="#fff"/><circle cx="12.800" cy="12" r="9.500" fill="#2ab741"/><path d="M8 7c-2 2 0 6 2 8s6 3.500 7.500 1.500L15 14l-1.700 1C11.500 14 10 12.500 9.700 11L11 9.500 9.500 7z" fill="#fff"/></svg>
<svg style="left:306px;top:736px" width="24" height="24"><circle cx="12" cy="12" r="11.500" fill="#f1f1f1"/><path d="M6 5l6 8 6-8M12 13v7" fill="none" stroke="#e0262a" stroke-width="2.800"/></svg>
<div style="left:298px;top:765px;width:40px;height:2px;background:#0078d7"></div>
<svg style="left:355px;top:736px" width="24" height="24"><circle cx="12" cy="12" r="11.500" fill="#141a2c"/><path d="M8 6l10 6-10 6z" fill="none" stroke="#2e7fe8" stroke-width="1.800"/><path d="M10 10l4 2-4 2z" fill="#2e7fe8"/></svg>
<div style="left:347px;top:765px;width:40px;height:2px;background:#0078d7"></div>
<div style="left:392px;top:728px;width:45px;height:39px;background:#e9f3f7"></div>
<svg style="left:404px;top:736px" width="22" height="22"><use href="#ac" width="22" height="22"/></svg>
<div style="left:392px;top:765px;width:45px;height:2px;background:#0078d7"></div>
<div style="left:440px;top:728px;width:1px;height:39px;background:#c5d9e3"></div>

<svg style="left:1073px;top:744px" width="12" height="7"><path d="M.5 6.500 6 1l5.500 5.500" fill="none" stroke="#111" stroke-width="1.100"/></svg>
<svg style="left:1097px;top:739px" width="14" height="18"><path d="M2 3h7M2 15h7" stroke="#333" stroke-dasharray="2 1" fill="none"/><rect x=".5" y="5.500" width="9" height="7" rx="2" fill="none" stroke="#222"/><path d="M10 8l3-2v6l-3-2" fill="none" stroke="#222"/></svg>
<svg style="left:1121px;top:739px" width="12" height="18"><rect x="3" y="0" width="6" height="12" rx="3" fill="#111"/><path d="M1 8c0 6 10 6 10 0M6 13v3M3 17h6" fill="none" stroke="#111"/></svg>
<svg style="left:1145px;top:742px" width="15" height="14"><path d="M1 13C1 7 6 2 13 1M4 13c0-4 4-7 9-8M7 13c0-2 2-4 6-4" fill="none" stroke="#333"/><circle cx="12.500" cy="12" r="1.500" fill="#111"/></svg>
<svg style="left:1167px;top:742px" width="16" height="12"><path d="M2 0v3M5 0v3M1 3h5v3H1zM3 6v3" stroke="#111" fill="none"/><rect x="6" y="3.500" width="9" height="6" fill="#111"/></svg>
<svg style="left:1191px;top:741px" width="16" height="15"><path d="M1 5h3l4-4v13l-4-4H1zM10 4c2 2 2 5 0 7M12.500 2c3 3 3 8 0 11" fill="none" stroke="#222"/></svg>
<div class="t" style="left:1217px;top:739px;font-size:12px;color:#222">РУС</div>
<div class="t" style="left:1240px;top:729px;width:78px;text-align:center;font-size:12px;color:#222">19:02</div>
<div class="t" style="left:1240px;top:748px;width:78px;text-align:center;font-size:12px;color:#222">08.01.2023</div>
<svg style="left:1325px;top:739px" width="16" height="15"><path d="M0 0h16v12H6l-3 3v-3H0z" fill="#000"/><path d="M3 3h10M3 6h10M3 9h7" stroke="#fff"/></svg>
<div style="left:1332px;top:746px;width:17px;height:17px;border-radius:50%;background:#cfcfcf;border:1px solid #666;text-align:center;line-height:15px;font-size:11px;font-weight:bold">4</div>
<div style="left:1361px;top:728px;width:1px;height:39px;background:#b8c8d2"></div>
</body></html>
